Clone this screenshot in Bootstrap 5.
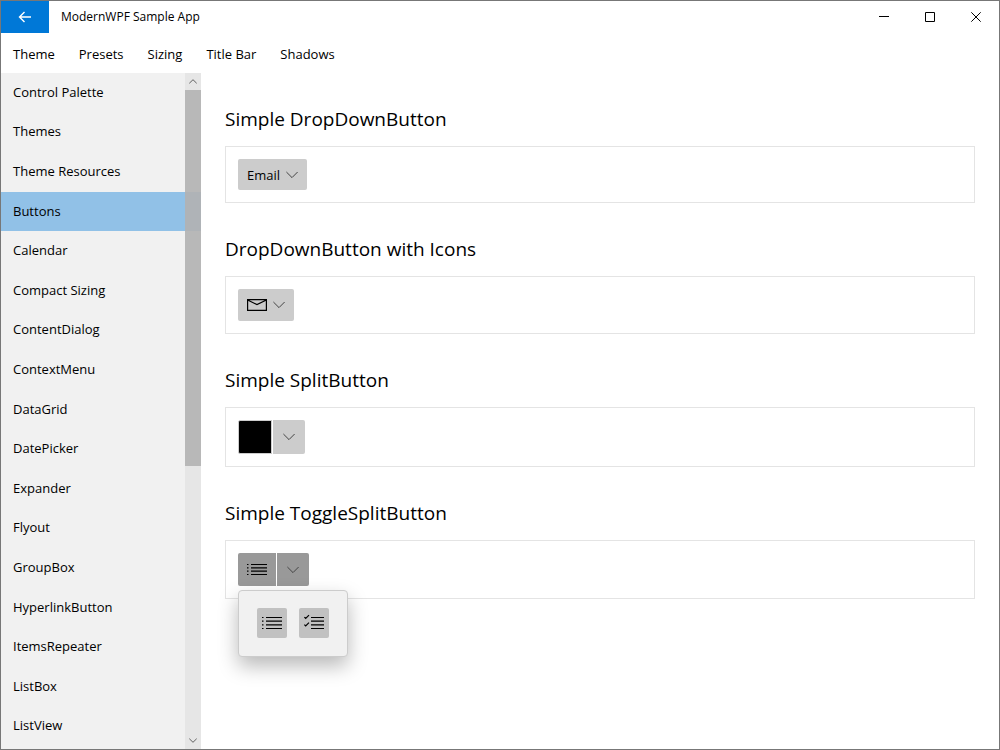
<!DOCTYPE html>
<html lang="en">
<head>
<meta charset="utf-8">
<meta name="viewport" content="width=device-width, initial-scale=1">
<title>ModernWPF Sample App</title>
<link href="https://cdn.jsdelivr.net/npm/bootstrap@5.3.0/dist/css/bootstrap.min.css" rel="stylesheet">
<style>
  body { font-family: "Open Sans", "Noto Sans", sans-serif; font-size: 13px; line-height: 20px; color: #000; background: #fff; }
  button { border: 0; padding: 0; color: inherit; }
  svg { display: block; fill: none; stroke: currentColor; overflow: visible; }
  .window { border: 1px solid #777; }
  .titlebar { height: 32px; font-size: 12px; }
  .back { width: 48px; background: #0078d7; color: #fff; }
  .caption-btn { width: 46px; background: transparent; }
  .menubar { height: 40px; padding-top: 2px; }
  .menubar a, .pages a { color: #000; padding: 0 12px; }
  .sidebar { width: 200px; background: #f1f1f1; }
  .pages { padding-bottom: 3px; }
  .pages a { padding-bottom: 2px; }
  .pages .active { background: #91c1e7; }
  .scroller { width: 16px; }
  .scroller button { height: 17px; background: #e6e6e6; color: #606060; }
  .thumb { flex: 376 1 0; background: rgba(178, 178, 178, .906); }
  .track { flex: 266 1 0; background: #e6e6e6; }
  .content-pane { padding: 0 24px 24px; }
  .content-pane h2 { font-size: 19px; line-height: 28px; font-weight: 400; margin: 32px 0 13px; }
  .sample { border: 1px solid #e4e4e4; padding: 12px; }
  .ctl { background: #ccc; border-radius: 2px; }
  .ctl-text { height: 31px; padding: 0 9px; gap: 6px; }
  .ctl-icon { height: 32px; padding: 0 9px; }
  .chev { color: #444; }
  .split { gap: 1px; }
  .split .ctl:first-child { border-radius: 2px 0 0 2px; }
  .split .split-arrow { border-radius: 0 2px 2px 0; width: 32px; }
  .swatch { width: 34px; height: 34px; border: 1px solid #ccc; background: #000; }
  .toggled .ctl { background: #999; height: 33px; }
  .toggled .ctl:first-child { width: 38px; }
  .flyout { top: 100%; left: 0; margin-top: 4px; padding: 17px 18px 18px; gap: 12px; background: #f1f1f1; border: 1px solid #ccc; border-radius: 4px; box-shadow: 0 9px 20px rgba(0,0,0,.28); }
  .flyout button { width: 30px; height: 30px; background: #c1c1c1; border-radius: 2px; }
</style>
</head>
<body>
<div class="window min-vh-100 d-flex flex-column">
  <header class="titlebar d-flex align-items-stretch">
    <button class="back d-flex align-items-center justify-content-center" aria-label="Back">
      <svg width="14" height="12" viewBox="0 0 14 12" stroke-width="1.4"><path d="M13 6H1.5M6.5 1L1.5 6l5 5"/></svg>
    </button>
    <span class="ms-2 ps-1 align-self-center">ModernWPF Sample App</span>
    <div class="d-flex ms-auto">
      <button class="caption-btn d-flex align-items-center justify-content-center" aria-label="Minimize"><svg width="10" height="10" viewBox="0 0 10 10"><path d="M0 4.5h10"/></svg></button>
      <button class="caption-btn d-flex align-items-center justify-content-center" aria-label="Maximize"><svg width="10" height="10" viewBox="0 0 10 10"><path d="M.5.5h9v9h-9z"/></svg></button>
      <button class="caption-btn d-flex align-items-center justify-content-center" aria-label="Close"><svg width="10" height="10" viewBox="0 0 10 10"><path d="M.3.3l9.400 9.400M9.700.3L.3 9.700"/></svg></button>
    </div>
  </header>
  <nav class="menubar d-flex align-items-center" aria-label="Options">
    <a class="text-decoration-none" href="#">Theme</a>
    <a class="text-decoration-none" href="#">Presets</a>
    <a class="text-decoration-none" href="#">Sizing</a>
    <a class="text-decoration-none" href="#">Title Bar</a>
    <a class="text-decoration-none" href="#">Shadows</a>
  </nav>
  <div class="d-flex flex-grow-1">
    <aside class="sidebar position-relative d-flex flex-shrink-0">
      <nav class="pages nav flex-column flex-nowrap flex-fill" aria-label="Pages">
        <a class="d-flex flex-fill align-items-center text-decoration-none" href="#">Control Palette</a>
        <a class="d-flex flex-fill align-items-center text-decoration-none" href="#">Themes</a>
        <a class="d-flex flex-fill align-items-center text-decoration-none" href="#">Theme Resources</a>
        <a class="active d-flex flex-fill align-items-center text-decoration-none" href="#" aria-current="page">Buttons</a>
        <a class="d-flex flex-fill align-items-center text-decoration-none" href="#">Calendar</a>
        <a class="d-flex flex-fill align-items-center text-decoration-none" href="#">Compact Sizing</a>
        <a class="d-flex flex-fill align-items-center text-decoration-none" href="#">ContentDialog</a>
        <a class="d-flex flex-fill align-items-center text-decoration-none" href="#">ContextMenu</a>
        <a class="d-flex flex-fill align-items-center text-decoration-none" href="#">DataGrid</a>
        <a class="d-flex flex-fill align-items-center text-decoration-none" href="#">DatePicker</a>
        <a class="d-flex flex-fill align-items-center text-decoration-none" href="#">Expander</a>
        <a class="d-flex flex-fill align-items-center text-decoration-none" href="#">Flyout</a>
        <a class="d-flex flex-fill align-items-center text-decoration-none" href="#">GroupBox</a>
        <a class="d-flex flex-fill align-items-center text-decoration-none" href="#">HyperlinkButton</a>
        <a class="d-flex flex-fill align-items-center text-decoration-none" href="#">ItemsRepeater</a>
        <a class="d-flex flex-fill align-items-center text-decoration-none" href="#">ListBox</a>
        <a class="d-flex flex-fill align-items-center text-decoration-none" href="#">ListView</a>
      </nav>
      <div class="scroller position-absolute top-0 bottom-0 end-0 d-flex flex-column">
        <button class="d-flex align-items-center justify-content-center" aria-label="Scroll up"><svg width="8" height="5" viewBox="0 0 8 5"><path d="M.3 4.3L4 .7l3.700 3.600"/></svg></button>
        <div class="thumb"></div>
        <div class="track"></div>
        <button class="d-flex align-items-center justify-content-center" aria-label="Scroll down"><svg width="8" height="5" viewBox="0 0 8 5"><path d="M.3.7L4 4.300 7.700.7"/></svg></button>
      </div>
    </aside>
    <main class="content-pane flex-grow-1">
      <h2>Simple DropDownButton</h2>
      <div class="sample d-flex">
        <button class="ctl ctl-text d-flex align-items-center">Email
          <svg class="chev" width="12" height="8" viewBox="0 0 12 8"><path d="M.4 1L6 6.600 11.600 1"/></svg>
        </button>
      </div>
      <h2>DropDownButton with Icons</h2>
      <div class="sample d-flex">
        <button class="ctl ctl-icon d-flex align-items-center gap-1" aria-label="Mail">
          <svg width="20" height="12" viewBox="0 0 20 12" stroke-width="1.2"><path d="M.6.6h18.800v10.800H.6zM.6 1L10 5.600 19.400 1"/></svg>
          <svg class="chev" width="14" height="8" viewBox="-2 0 14 8"><path d="M.4 1L6 6.600 11.600 1"/></svg>
        </button>
      </div>
      <h2>Simple SplitButton</h2>
      <div class="sample d-flex">
        <div class="split d-flex">
          <button class="ctl swatch" aria-label="Black"></button>
          <button class="ctl split-arrow d-flex align-items-center justify-content-center" aria-label="Choose colour"><svg class="chev" width="12" height="8" viewBox="0 0 12 8"><path d="M.4 1L6 6.600 11.600 1"/></svg></button>
        </div>
      </div>
      <h2>Simple ToggleSplitButton</h2>
      <div class="sample d-flex">
        <div class="split toggled d-flex position-relative">
          <button class="ctl d-flex align-items-center justify-content-center" aria-label="Bulleted list" aria-pressed="true"><svg width="20" height="13" viewBox="0 0 20 13" stroke-width="1.2"><path d="M4 1.500h16M4 4.800h16M4 8.200h16M4 11.500h16M0 1.500h1.500M0 4.800h1.500M0 8.200h1.500M0 11.500h1.500"/></svg></button>
          <button class="ctl split-arrow d-flex align-items-center justify-content-center" aria-label="List styles" aria-expanded="true"><svg class="chev" width="12" height="8" viewBox="0 0 12 8"><path d="M.4 1L6 6.600 11.600 1"/></svg></button>
          <div class="flyout position-absolute d-flex">
            <button class="d-flex align-items-center justify-content-center" aria-label="Bulleted list"><svg width="20" height="12" viewBox="0 0 20 12" stroke-width="1.2"><path d="M4 .5h16M4 4.200h16M4 7.800h16M4 11.500h16M0 .5h1.500M0 4.200h1.500M0 7.800h1.500M0 11.500h1.500"/></svg></button>
            <button class="d-flex align-items-center justify-content-center" aria-label="Check list"><svg width="20" height="12" viewBox="0 0 20 12" stroke-width="1.2"><path d="M7 .5h13M7 4.200h13M7 7.800h13M7 11.500h13M.4.2l1.300 1.300L5-1.800M.4 7.700l1.300 1.300L5 5.700"/></svg></button>
          </div>
        </div>
      </div>
    </main>
  </div>
</div>
<script src="https://cdn.jsdelivr.net/npm/bootstrap@5.3.0/dist/js/bootstrap.bundle.min.js"></script>
</body>
</html>
